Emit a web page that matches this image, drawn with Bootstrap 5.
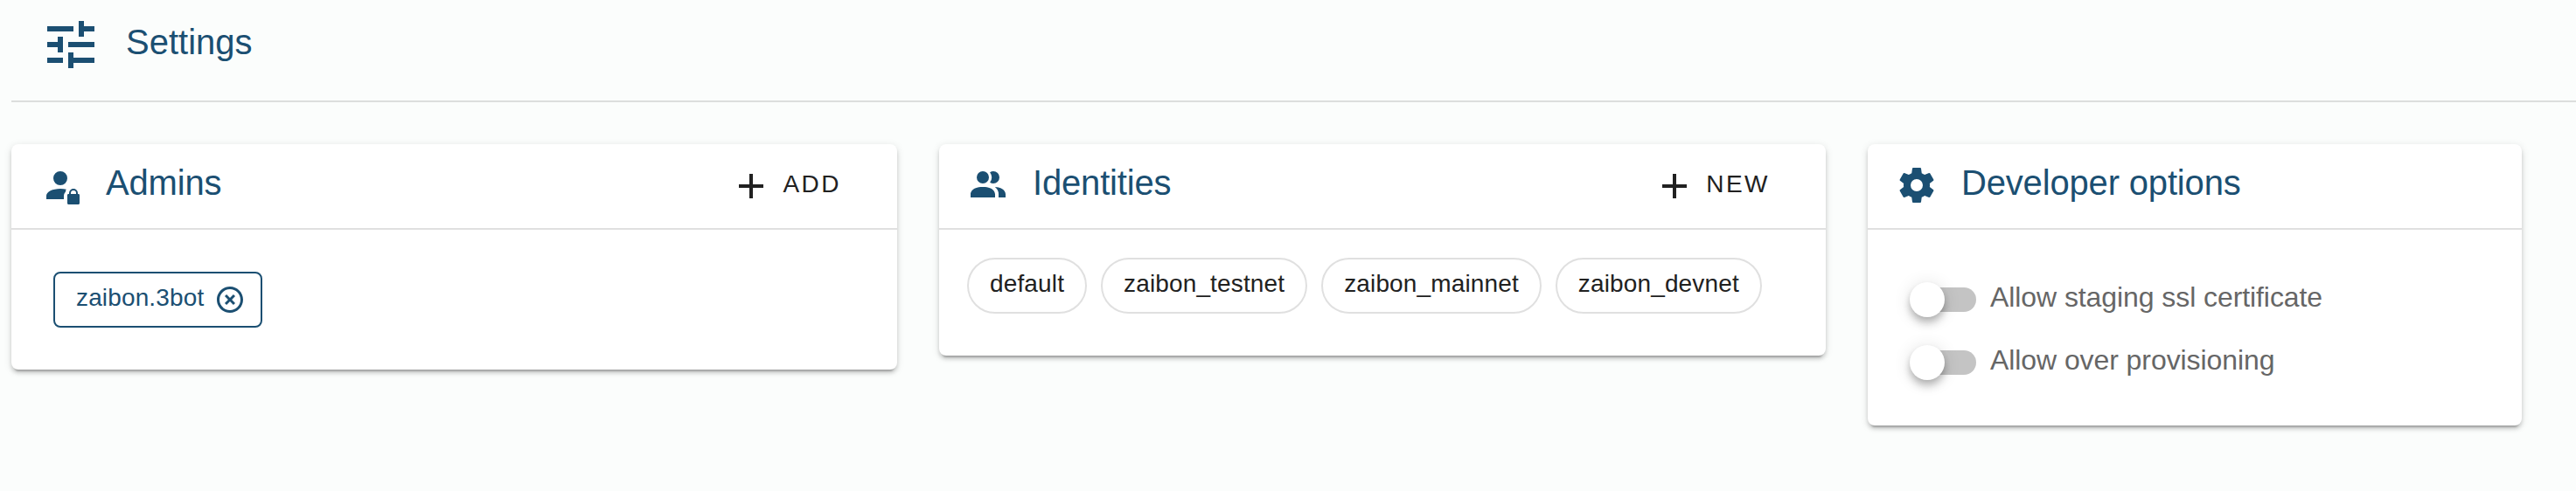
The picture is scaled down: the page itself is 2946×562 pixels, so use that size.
<!DOCTYPE html>
<html lang="en">
<head>
<meta charset="utf-8">
<meta name="viewport" content="width=device-width, initial-scale=1">
<title>Settings</title>
<link href="https://cdn.jsdelivr.net/npm/bootstrap@5.3.0/dist/css/bootstrap.min.css" rel="stylesheet">
<style>
  :root { --brand: #1b4f72; --ink: #212121; --rule: #e0e0e0; }
  body { background: #fbfdfc; font-family: "Liberation Sans", Arial, sans-serif; color: var(--ink); min-height: 100vh; }
  svg { display: block; fill: currentColor; flex: none; }
  .brand { color: var(--brand); }
  .page-head { margin-left: 13px; height: 117px; padding: 15px 0 0 32px; border-bottom: 2px solid #dcdedd; }
  .heading { font-size: 40px; line-height: 48px; font-weight: 400; margin: 0 0 8px; white-space: nowrap; letter-spacing: -.17px; }
  .page-head .heading { margin: 9px 0 0 27px; letter-spacing: 0; }
  .panels { padding: 48px 0 0 13px; gap: 48px; }
  .panel { border: 0; border-radius: 8px; background: #fff; color: var(--ink);
    box-shadow: 0 6px 2px -4px rgba(0,0,0,.2), 0 4px 4px 0 rgba(0,0,0,.14), 0 2px 10px 0 rgba(0,0,0,.12); }
  .panel-wide { width: 1013px; }
  .panel-id { width: 1014px; }
  .panel-dev { width: 748px; }
  .panel-head { height: 98px; border-bottom: 2px solid var(--rule); padding: 0 64px 0 32px; }
  .panel-head > svg { margin-bottom: 2px; margin-right: 27px; }
  .panel-admin .panel-head { padding-left: 36px; }
  .panel-admin .panel-head > svg { margin-right: 24px; }
  .act { border: 0; padding: 0; background: none; color: var(--ink); font-size: 28px; line-height: 40px; letter-spacing: 2.5px; gap: 12px; border-radius: 0; }
  .act span { margin-bottom: 5px; }
  .tag { height: 64px; border: 2px solid var(--rule); padding: 0 24px 4px; font-size: 28px; line-height: 56px; letter-spacing: .14px; border-radius: 32px; white-space: nowrap; }
  .tag-admin { width: 239px; border-color: var(--brand); border-radius: 8px; color: var(--brand); padding: 0 17px 0 24px; }
  .tag-admin span { padding-bottom: 4px; }
  .admin-body { padding: 48px; }
  .id-body { padding: 32px 32px 48px; gap: 16px; }
  .dev-body { padding: 44px 48px 36px; }
  .opt { height: 72px; gap: 16px; }
  .track { width: 72px; height: 28px; border-radius: 14px; background: #c4c4c4; margin-left: 4px; }
  .thumb { width: 40px; height: 40px; border-radius: 50%; background: #fff; margin-left: -4px; flex: none;
    box-shadow: 0 4px 8px -2px rgba(0,0,0,.2), 0 8px 10px 0 rgba(0,0,0,.14), 0 2px 20px 0 rgba(0,0,0,.12); }
  .opt label { font-size: 32px; line-height: 40px; color: #666; margin-bottom: 6px; white-space: nowrap; font-variant-ligatures: none; letter-spacing: -.08px; }
</style>
</head>
<body>
<header class="page-head d-flex align-items-start brand">
  <svg width="72" height="72" viewBox="0 0 24 24"><path d="M3,17V19H9V17H3M3,5V7H13V5H3M13,21V19H21V17H13V15H11V21H13M7,9V11H3V13H7V15H9V9H7M21,13V11H11V13H21M15,9H17V7H21V5H17V3H15V9Z"/></svg>
  <h1 class="heading">Settings</h1>
</header>
<main class="panels d-flex align-items-start">
  <section class="card panel panel-wide panel-admin flex-shrink-0">
    <div class="panel-head d-flex align-items-center">
      <svg class="brand" width="48" height="48" viewBox="0 0 24 24"><path d="M6 8A4 4 0 1 1 14 8A4 4 0 1 1 6 8M12 18.2C12 17.2 12.5 16.3 13 15.8C13 15.3 13.1 14.8 13.4 14.4C12.4 14.1 11.2 14 10 14C5.58 14 2 15.79 2 18V20H12V18.2M20.3 17H20V16.5A2.5 2.5 0 0 0 15 16.5V17H14.7A.7 .7 0 0 0 14 17.7V22.2A.8 .8 0 0 0 14.8 23H20.2A.8 .8 0 0 0 21 22.2V17.7A.7 .7 0 0 0 20.3 17M19 17H16V16.5A1.5 1.5 0 0 1 19 16.5V17Z"/></svg>
      <h2 class="heading brand">Admins</h2>
      <button class="btn act d-flex align-items-center ms-auto" type="button">
        <svg width="48" height="48" viewBox="0 0 24 24"><path d="M19,13H13V19H11V13H5V11H11V5H13V11H19V13Z"/></svg><span>ADD</span>
      </button>
    </div>
    <div class="admin-body d-flex">
      <div class="tag tag-admin d-flex align-items-center justify-content-between"><span>zaibon.3bot</span>
        <svg width="36" height="36" viewBox="0 0 24 24"><path d="M12,20C7.59,20 4,16.41 4,12C4,7.59 7.59,4 12,4C16.41,4 20,7.59 20,12C20,16.41 16.41,20 12,20M12,2C6.47,2 2,6.47 2,12C2,17.53 6.47,22 12,22C17.53,22 22,17.53 22,12C22,6.47 17.53,2 12,2M14.59,8L12,10.59L9.41,8L8,9.41L10.59,12L8,14.59L9.41,16L12,13.41L14.59,16L16,14.59L13.41,12L16,9.41L14.59,8Z"/></svg>
      </div>
    </div>
  </section>
  <section class="card panel panel-id flex-shrink-0">
    <div class="panel-head d-flex align-items-center">
      <svg class="brand" width="48" height="48" viewBox="0 0 24 24"><path d="M16 17V19H2V17S2 13 9 13 16 17 16 17M12.5 7.5A3.5 3.5 0 1 0 9 11A3.5 3.5 0 0 0 12.5 7.5M15.94 13A5.32 5.32 0 0 1 18 17V19H22V17S22 13.37 15.94 13M15 4A3.39 3.39 0 0 0 13.07 4.59A5 5 0 0 1 13.07 10.41A3.39 3.39 0 0 0 15 11A3.5 3.5 0 0 0 15 4Z"/></svg>
      <h2 class="heading brand">Identities</h2>
      <button class="btn act d-flex align-items-center ms-auto" type="button">
        <svg width="48" height="48" viewBox="0 0 24 24"><path d="M19,13H13V19H11V13H5V11H11V5H13V11H19V13Z"/></svg><span>NEW</span>
      </button>
    </div>
    <div class="id-body d-flex">
      <div class="tag">default</div>
      <div class="tag">zaibon_testnet</div>
      <div class="tag">zaibon_mainnet</div>
      <div class="tag">zaibon_devnet</div>
    </div>
  </section>
  <section class="card panel panel-dev flex-shrink-0">
    <div class="panel-head d-flex align-items-center">
      <svg class="brand" width="48" height="48" viewBox="0 0 24 24"><path d="M12,15.5A3.5,3.5 0 0,1 8.5,12A3.5,3.5 0 0,1 12,8.5A3.5,3.5 0 0,1 15.5,12A3.5,3.5 0 0,1 12,15.5M19.43,12.97C19.47,12.65 19.5,12.33 19.5,12C19.5,11.67 19.47,11.34 19.43,11L21.54,9.37C21.73,9.22 21.78,8.95 21.66,8.73L19.66,5.27C19.54,5.05 19.27,4.96 19.05,5.05L16.56,6.05C16.04,5.66 15.5,5.32 14.87,5.07L14.5,2.42C14.46,2.18 14.25,2 14,2H10C9.75,2 9.54,2.18 9.5,2.42L9.13,5.07C8.5,5.32 7.96,5.66 7.44,6.05L4.95,5.05C4.73,4.96 4.46,5.05 4.34,5.27L2.34,8.73C2.21,8.95 2.27,9.22 2.46,9.37L4.57,11C4.53,11.34 4.5,11.67 4.5,12C4.5,12.33 4.53,12.65 4.57,12.97L2.46,14.63C2.27,14.78 2.21,15.05 2.34,15.27L4.34,18.73C4.46,18.95 4.73,19.03 4.95,18.95L7.44,17.94C7.96,18.34 8.5,18.68 9.13,18.93L9.5,21.58C9.54,21.82 9.75,22 10,22H14C14.25,22 14.46,21.82 14.5,21.58L14.87,18.93C15.5,18.67 16.04,18.34 16.56,17.94L19.05,18.95C19.27,19.03 19.54,18.95 19.66,18.73L21.66,15.27C21.78,15.05 21.73,14.78 21.54,14.63L19.43,12.97Z"/></svg>
      <h2 class="heading brand">Developer options</h2>
    </div>
    <div class="dev-body">
      <div class="opt d-flex align-items-center"><div class="track d-flex align-items-center"><div class="thumb"></div></div><label>Allow staging ssl certificate</label></div>
      <div class="opt d-flex align-items-center"><div class="track d-flex align-items-center"><div class="thumb"></div></div><label>Allow over provisioning</label></div>
    </div>
  </section>
</main>
<script src="https://cdn.jsdelivr.net/npm/bootstrap@5.3.0/dist/js/bootstrap.bundle.min.js"></script>
</body>
</html>
